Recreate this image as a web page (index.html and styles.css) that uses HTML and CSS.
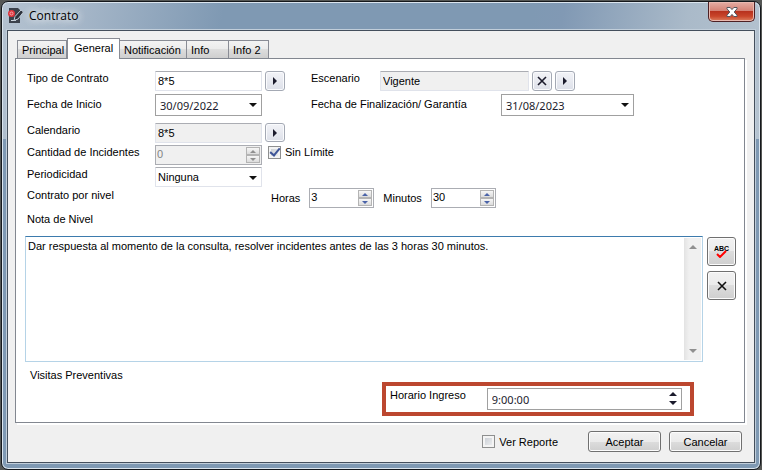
FILE: index.html
```
<!DOCTYPE html>
<html lang="es">
<head>
    <meta charset="UTF-8">
    <title>Contrato</title>
    <link rel="stylesheet" href="styles.css">
</head>
<body>
    <div class="window">
        <!-- Title bar -->
        <header class="titlebar">
            <svg class="app-icon" width="16" height="16" viewBox="0 0 16 16">
                <path d="M1 0h9l2 2v13H1z" fill="#3c424c"/>
                <path d="M3 12.500h5" stroke="#cfd6de" fill="none"/>
                <path d="M6 12.500l1-4L13 2l2.500 2L10 11z" fill="#2c323c" stroke="#c4ced9"/>
                <circle cx="3.500" cy="5.500" r="3.500" fill="#e0343c"/>
                <circle cx="3.500" cy="5.500" r="1.500" fill="none" stroke="#f3a9ac"/>
            </svg>
            <h1>Contrato</h1>
            <button type="button" class="close-btn" aria-label="Cerrar">
                <svg width="12" height="10" viewBox="0 0 12 10">
                    <path d="M1 .5h3.200L6 2.600 7.800.5H11v1.300L8.200 5 11 8.200v1.300H7.800L6 7.400 4.200 9.500H1V8.200L3.800 5 1 1.800z" fill="#fff" stroke="#53565f"/>
                </svg>
            </button>
        </header>

        <form class="client">
            <nav class="tabs">
                <button type="button" class="tab tab-principal">Principal</button>
                <button type="button" class="tab tab-general active">General</button>
                <button type="button" class="tab tab-notificacion">Notificación</button>
                <button type="button" class="tab tab-info">Info</button>
                <button type="button" class="tab tab-info2">Info 2</button>
            </nav>

            <main class="panel">
                <div class="fields">
                    <div class="row">
                        <label class="label" for="tipo">Tipo de Contrato</label>
                        <input type="text" id="tipo" class="field" value="8*5">
                        <button type="button" class="mini-btn" aria-label="Buscar tipo"><span class="arrow-right"></span></button>
                        <label class="label label-second" for="escenario">Escenario</label>
                        <input type="text" id="escenario" class="field field-wide readonly" value="Vigente" readonly>
                        <button type="button" class="mini-btn" aria-label="Quitar escenario">
                            <svg width="10" height="10" viewBox="0 0 10 10"><path d="M1 1l8 8M9 1L1 9" stroke="#1b1b2c" stroke-width="1.600"/></svg>
                        </button>
                        <button type="button" class="mini-btn" aria-label="Buscar escenario"><span class="arrow-right"></span></button>
                    </div>

                    <div class="row row-date">
                        <label class="label" for="inicio">Fecha de Inicio</label>
                        <div class="combo">
                            <input type="text" id="inicio" class="date" value="30/09/2022">
                            <span class="arrow-down"></span>
                        </div>
                        <label class="label label-end" for="fin">Fecha de Finalización/ Garantía</label>
                        <div class="combo combo-wide">
                            <input type="text" id="fin" class="date" value="31/08/2023">
                            <span class="arrow-down"></span>
                        </div>
                    </div>

                    <div class="row row-calendar">
                        <label class="label" for="calendario">Calendario</label>
                        <input type="text" id="calendario" class="field readonly" value="8*5" readonly>
                        <button type="button" class="mini-btn" aria-label="Buscar calendario"><span class="arrow-right"></span></button>
                    </div>

                    <div class="row">
                        <label class="label" for="cantidad">Cantidad de Incidentes</label>
                        <div class="spinner disabled">
                            <input type="number" id="cantidad" value="0" disabled>
                            <span class="spin"><i class="up"></i><i class="down"></i></span>
                        </div>
                        <label class="check"><input type="checkbox" checked>Sin Límite</label>
                    </div>

                    <div class="row">
                        <label class="label" for="periodicidad">Periodicidad</label>
                        <div class="combo">
                            <select id="periodicidad" class="field">
                                <option>Ninguna</option>
                            </select>
                            <span class="arrow-down"></span>
                        </div>
                    </div>

                    <div class="row row-level">
                        <span class="label">Contrato por nivel</span>
                        <label class="time-label" for="horas">Horas</label>
                        <div class="spinner small">
                            <input type="number" id="horas" value="3">
                            <span class="spin"><i class="up"></i><i class="down"></i></span>
                        </div>
                        <label class="time-label" for="minutos">Minutos</label>
                        <div class="spinner small">
                            <input type="number" id="minutos" value="30">
                            <span class="spin"><i class="up"></i><i class="down"></i></span>
                        </div>
                    </div>

                    <label class="label" for="nota">Nota de Nivel</label>
                </div>

                <div class="note">
                    <div class="note-box">
                        <textarea id="nota">Dar respuesta al momento de la consulta, resolver incidentes antes de las 3 horas 30 minutos.</textarea>
                        <div class="scrollbar"><i class="up"></i><i class="down"></i></div>
                    </div>
                    <div class="note-tools">
                        <button type="button" class="tool-btn" aria-label="Ortografía">
                            <span class="abc">ABC</span>
                            <svg class="abc-check" width="11" height="8" viewBox="0 0 11 8"><path d="M1 4l3 3 6-6" fill="none" stroke="#f00" stroke-width="2"/></svg>
                        </button>
                        <button type="button" class="tool-btn" aria-label="Borrar nota">
                            <svg width="10" height="10" viewBox="0 0 10 10"><path d="M1 1l8 8M9 1L1 9" stroke="#111" stroke-width="1.600"/></svg>
                        </button>
                    </div>
                </div>

                <p class="visits">Visitas Preventivas</p>

                <div class="entry">
                    <label for="ingreso">Horario Ingreso</label>
                    <div class="combo combo-time">
                        <input type="text" id="ingreso" class="date" value="9:00:00">
                        <span class="time-spin"><i class="up"></i><i class="down"></i></span>
                    </div>
                </div>
            </main>

            <footer class="footer">
                <label class="check"><input type="checkbox">Ver Reporte</label>
                <button type="submit" class="btn">Aceptar</button>
                <button type="button" class="btn">Cancelar</button>
            </footer>
        </form>
    </div>
</body>
</html>
```
FILE: styles.css
```
* {
    box-sizing: border-box;
}

body {
    margin: 0;
    padding: 1px;
    min-height: 100vh;
    display: flex;
    background: #555755;
    font-family: "Liberation Sans", Arial, sans-serif;
    font-size: 11px;
    line-height: 14px;
    color: #000;
}

input,
select,
textarea,
button {
    margin: 0;
    font: inherit;
    color: inherit;
}

/* Window frame */
.window {
    flex: 1;
    display: flex;
    flex-direction: column;
    padding: 0 5px 6px;
    border: 1px solid #15181c;
    border-radius: 7px;
    box-shadow: inset 0 0 0 1px #dbe5ee;
    background: linear-gradient(100deg, #b4c2d0 0, #a5b6c8 80px, #7f99b3 220px, #7f99b3 68%, #8199b4 72%, #aabac9 88%, #b5c3d0 100%) top / 100% 137px no-repeat, #7f99b3;
}

.titlebar {
    display: flex;
    align-items: center;
    height: 28px;
    padding-left: 1px;
}

.app-icon {
    margin-right: 5px;
}

.titlebar h1 {
    flex: 1;
    margin: 0;
    font-family: "Open Sans", "Noto Sans", sans-serif;
    font-size: 12px;
    font-weight: normal;
    text-shadow: 0 0 8px #fff, 0 0 8px #fff;
}

.close-btn {
    display: flex;
    align-items: center;
    justify-content: center;
    align-self: flex-start;
    width: 47px;
    height: 20px;
    padding: 0;
    border: 1px solid #4d2024;
    border-top: 0;
    border-radius: 0 0 5px 5px;
    box-shadow: inset 0 0 0 1px #e9b9b0;
    background: linear-gradient(#e5ada4, #d58376 45%, #b8321e 50%, #c9452a 75%, #dc8060);
}

/* Client area */
.client {
    flex: 1;
    display: flex;
    flex-direction: column;
    padding: 7px 9px 10px 7px;
    border: 1px solid #444f5c;
    outline: 1px solid #c1ceda;
    background: #f0f0f0;
}

.tabs {
    display: flex;
    align-items: flex-end;
    height: 20px;
    padding-left: 2px;
}

.tab {
    height: 18px;
    padding: 0 0 0 4px;
    border: 1px solid #898c95;
    border-width: 1px 1px 0 0;
    background: linear-gradient(#f3f3f3, #ebebeb 50%, #dddddd 50%, #cfcfcf);
    text-align: left;
    white-space: nowrap;
}

.tab:first-child {
    border-left-width: 1px;
}

.tab-principal {
    width: 50px;
}

.tab-general {
    width: 53px;
}

.tab-notificacion {
    width: 67px;
}

.tab-info {
    width: 42px;
}

.tab-info2 {
    width: 40px;
}

.tab.active {
    position: relative;
    height: 21px;
    margin-bottom: -1px;
    padding: 0 0 2px 6px;
    border-left-width: 1px;
    background: #fff;
}

.panel {
    flex: 1;
    border: 1px solid #828790;
    box-shadow: 2px 2px 0 #fff;
    background: #fff;
    padding: 12px 8px 6px 9px;
}

/* Form rows */
.fields {
    display: flex;
    flex-direction: column;
    padding-left: 2px;
}

.row {
    display: flex;
    align-items: flex-start;
    gap: 3px;
    margin-bottom: 2px;
}

.label {
    width: 125px;
    white-space: nowrap;
}

.label-second {
    width: 66px;
    margin-left: 23px;
}

.label-end {
    width: 187px;
    margin-left: 46px;
}

.field {
    width: 107px;
    height: 20px;
    padding: 0 2px;
    border: 1px solid #e0e3eb;
    border-top-color: #abadb3;
    border-radius: 1px;
    background: #fff;
}

.field-wide {
    width: 149px;
}

.readonly {
    background: #f0f0f0;
}

.mini-btn {
    display: flex;
    align-items: center;
    justify-content: center;
    width: 20px;
    height: 20px;
    padding: 0;
    border: 1px solid #a4a9b4;
    border-radius: 3px;
    box-shadow: inset 0 0 0 1px #fafbfd;
    background: linear-gradient(#f2f3f7, #dde0e9);
}

.arrow-right {
    border: 4px solid transparent;
    border-left-color: #1b1b2c;
    border-right: 0;
}

.row-date {
    margin: 1px 0 7px;
}

.row-date .label {
    padding-top: 3px;
}

.combo {
    position: relative;
    width: 107px;
}

.combo-wide {
    width: 133px;
}

.combo select {
    display: block;
    appearance: none;
}

.date {
    display: block;
    width: 100%;
    height: 22px;
    padding: 0 4px;
    border: 1px solid #a0a0a0;
    background: #fff;
    font-family: "Noto Sans", "Open Sans", sans-serif;
    font-size: 11px;
    color: #1b1b2c;
}

.arrow-down {
    position: absolute;
    top: 9px;
    right: 5px;
    border: 4px solid transparent;
    border-top-color: #111;
    border-bottom: 0;
    pointer-events: none;
}

.row-calendar .mini-btn {
    height: 19px;
}

/* Number boxes */
.spinner {
    display: flex;
    width: 107px;
    height: 20px;
    padding: 1px;
    border: 1px solid #abadb3;
    background: #fff;
}

.spinner input {
    flex: 1;
    min-width: 0;
    height: 14px;
    padding: 0;
    border: 0;
    background: none;
    appearance: textfield;
}

.spinner input::-webkit-inner-spin-button {
    appearance: none;
    margin: 0;
}

.spinner.small {
    width: 65px;
}

.spinner.disabled {
    background: #f0f0f0;
    color: #838383;
}

.spin {
    display: flex;
    flex-direction: column;
    width: 14px;
}

.spin i {
    flex: 1;
    display: flex;
    align-items: center;
    justify-content: center;
    border: 1px solid #b4b4b4;
    background: linear-gradient(#f6f6f6, #dcdcdc);
}

.up::after,
.down::after {
    content: "";
    border: 3px solid transparent;
}

.up::after {
    border-top: 0;
    border-bottom-color: #4a63a8;
}

.down::after {
    border-bottom: 0;
    border-top-color: #4a63a8;
}

.disabled .up::after,
.scrollbar .up::after {
    border-bottom-color: #909090;
}

.disabled .down::after,
.scrollbar .down::after {
    border-top-color: #909090;
}

.check {
    display: flex;
    align-items: center;
    gap: 4px;
    white-space: nowrap;
}

.check input {
    appearance: none;
    display: flex;
    align-items: center;
    justify-content: center;
    width: 13px;
    height: 13px;
    border: 1px solid #8e8f8f;
    box-shadow: inset 0 0 0 2px #f4f4f4;
    background: linear-gradient(135deg, #c4c9d0, #f3f4f5);
}

.check input:checked::after {
    content: "";
    width: 4px;
    height: 8px;
    margin-bottom: 2px;
    border: solid #3e5598;
    border-width: 0 2px 2px 0;
    transform: rotate(40deg);
}

.row .check {
    margin-left: 3px;
}

.row-level {
    margin: -1px 0 4px;
}

.time-label {
    margin: 3px 6px 0 0;
}

.row-level .label {
    width: 241px;
}

.spinner + .time-label {
    margin-left: 6px;
}

/* Note */
.note {
    display: flex;
    gap: 4px;
    margin-top: 10px;
}

.note-box {
    flex: 1;
    display: flex;
    height: 126px;
    padding: 1px;
    border: 1px solid #b5d3e7;
    border-top-color: #3d7bad;
}

.note-box textarea {
    flex: 1;
    min-width: 0;
    padding: 1px;
    border: 0;
    outline: 0;
    overflow: hidden;
    resize: none;
}

.scrollbar {
    display: flex;
    flex-direction: column;
    justify-content: space-between;
    width: 17px;
    padding: 7px 0;
    background: linear-gradient(90deg, #e3e3e3, #f0f0f0 30%, #f0f0f0);
}

.scrollbar i {
    display: flex;
    justify-content: center;
}

.scrollbar .up::after,
.scrollbar .down::after {
    border-width: 4px;
}

.scrollbar .up::after {
    border-top-width: 0;
}

.scrollbar .down::after {
    border-bottom-width: 0;
}

.note-tools {
    display: flex;
    flex-direction: column;
    gap: 5px;
    padding-top: 1px;
}

.tool-btn {
    position: relative;
    display: flex;
    align-items: center;
    justify-content: center;
    width: 29px;
    height: 29px;
    padding: 0;
    border: 1px solid #707070;
    border-radius: 3px;
    box-shadow: inset 0 0 0 1px #fcfcfc;
    background: linear-gradient(#f2f2f2, #ebebeb 50%, #dddddd 50%, #cfcfcf);
}

.abc {
    padding-bottom: 5px;
    font-size: 7px;
    font-weight: bold;
    line-height: 8px;
}

.abc-check {
    position: absolute;
    left: 8px;
    top: 12px;
}

.visits {
    margin: 6px 5px 0;
}

/* Entry time */
.entry {
    display: flex;
    gap: 21px;
    width: 312px;
    margin: 0 42px 0 auto;
    padding: 2px 8px 2px 4px;
    border: 4px solid #bc472f;
}

.combo-time {
    flex: 1;
}

.time-spin {
    position: absolute;
    top: 4px;
    right: 5px;
    display: flex;
    flex-direction: column;
    gap: 5px;
    pointer-events: none;
}

.time-spin i {
    display: flex;
}

.time-spin .up::after,
.time-spin .down::after {
    border-width: 4px;
}

.time-spin .up::after {
    border-top-width: 0;
    border-bottom-color: #1b1b2c;
}

.time-spin .down::after {
    border-bottom-width: 0;
    border-top-color: #1b1b2c;
}

/* Footer */
.footer {
    display: flex;
    justify-content: flex-end;
    gap: 8px;
    padding: 8px 3px 0 0;
}

.footer .check {
    margin-right: 22px;
}

.btn {
    width: 73px;
    height: 21px;
    padding: 0;
    border: 1px solid #707070;
    border-radius: 3px;
    box-shadow: inset 0 0 0 1px #fcfcfc;
    background: linear-gradient(#f2f2f2, #ebebeb 50%, #dddddd 50%, #cfcfcf);
}
```
